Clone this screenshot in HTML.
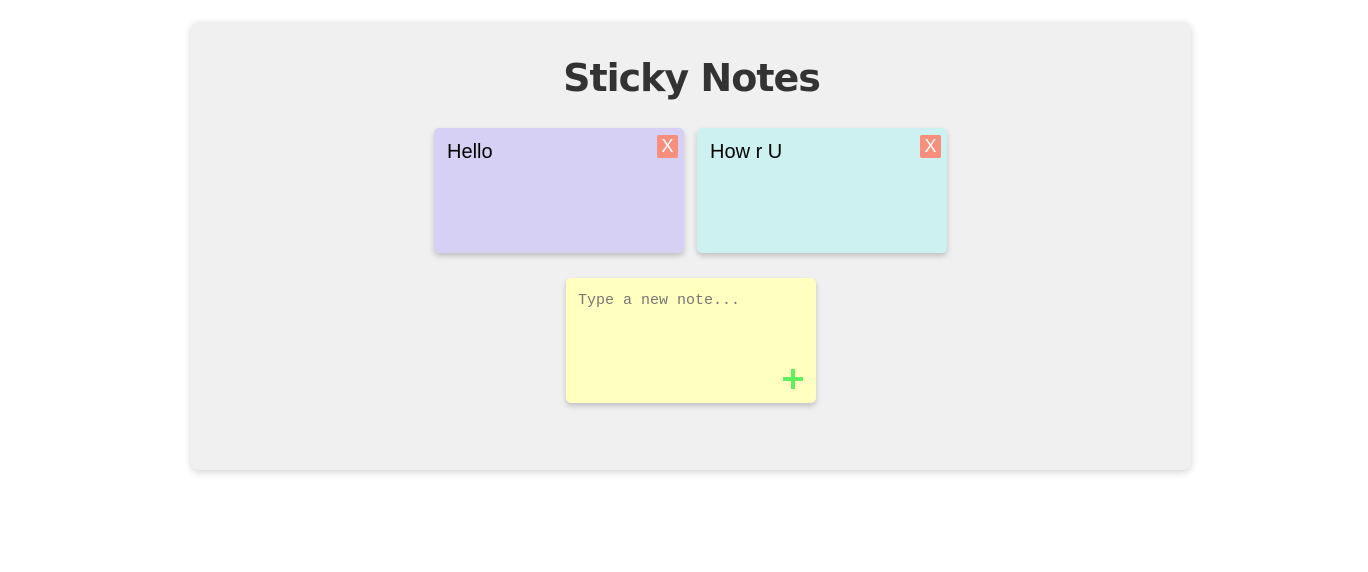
<!DOCTYPE html>
<html><head><style>
body{margin:0;background:#fff;width:1368px;height:572px;position:relative;font-family:"Liberation Sans",sans-serif}
.c{position:absolute;left:191px;top:22px;width:1000px;height:448px;background:#f0f0f0;border-radius:8px;box-shadow:0 2px 8px rgba(0,0,0,.18)}
h1{position:absolute;left:15px;right:0;top:56px;margin:0;text-align:center;font:bold 38px "DejaVu Sans",sans-serif;color:#333;letter-spacing:-1px}
.n{position:absolute;top:128px;width:250px;height:125px;border-radius:5px;box-shadow:0 3px 6px rgba(0,0,0,.2)}
.n span{position:absolute;left:13px;top:13px;font-size:20px;color:#000}
.x{position:absolute;right:6px;top:7px;width:21px;height:23px;background:#f88e7c;color:#fff;font-size:18px;text-align:center;line-height:23px;border-radius:2px}
.in{position:absolute;left:566px;top:278px;width:250px;height:125px;background:#ffffc0;border-radius:5px;box-shadow:0 3px 6px rgba(0,0,0,.2)}
.in span{position:absolute;left:12px;top:14px;font:15px "Liberation Mono",monospace;color:#777}
.p{position:absolute;left:217px;top:91px;width:20px;height:20px}
.p:before{content:"";position:absolute;left:8px;top:0;width:4px;height:20px;background:#5ef05e}
.p:after{content:"";position:absolute;left:0;top:8px;width:20px;height:4px;background:#5ef05e}
</style></head><body>
<div class="c"></div>
<h1>Sticky Notes</h1>
<div class="n" style="left:434px;background:#d5d0f4"><span>Hello</span><div class="x">X</div></div>
<div class="n" style="left:697px;background:#ccf1f0"><span>How r U</span><div class="x">X</div></div>
<div class="in"><span>Type a new note...</span><div class="p"></div></div>
</body></html>
